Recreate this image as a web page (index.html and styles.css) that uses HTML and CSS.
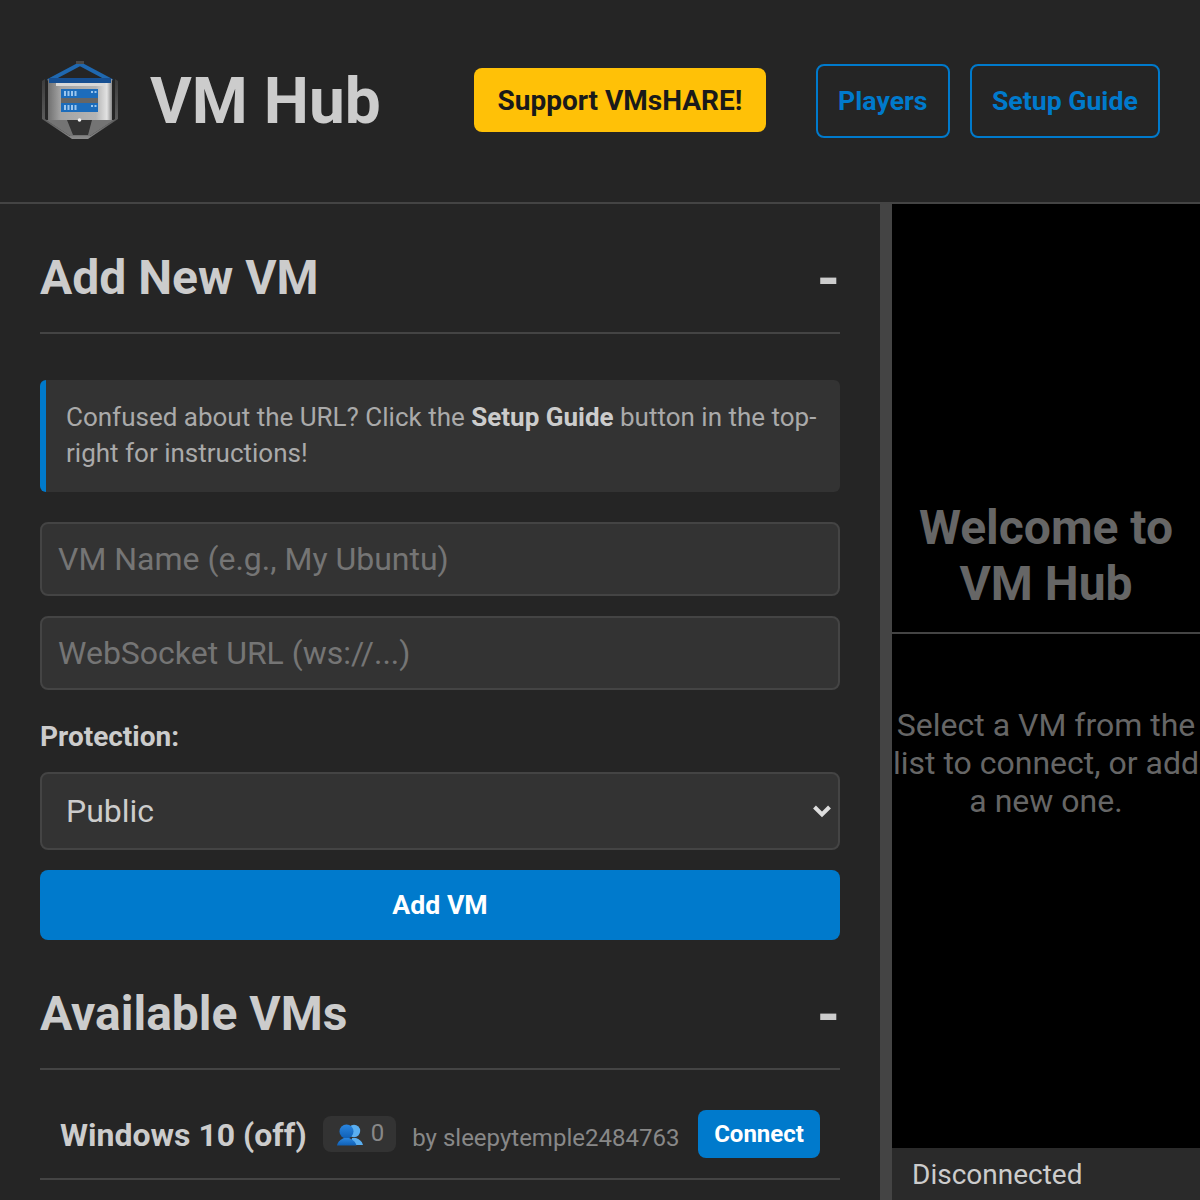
FILE: index.html
```html
<!DOCTYPE html>
<html lang="en">
<head>
<meta charset="utf-8">
<title>VM Hub</title>
<link rel="stylesheet" href="styles.css">
</head>
<body>
<header class="header">
  <div class="brand">
    <svg class="logo" viewBox="0 0 80 80" aria-hidden="true">
      <defs>
        <linearGradient id="silver" x1="0" x2="1" y1="0" y2="0">
          <stop offset="0" stop-color="#707070"/>
          <stop offset="0.2" stop-color="#a4a4a4"/>
          <stop offset="0.75" stop-color="#b4b4b4"/>
          <stop offset="0.92" stop-color="#e2e2e2"/>
          <stop offset="1" stop-color="#8c8c8c"/>
        </linearGradient>
        <linearGradient id="shell" x1="0" x2="0" y1="0" y2="1">
          <stop offset="0" stop-color="#3c3c3c"/>
          <stop offset="0.7" stop-color="#5c5c5c"/>
          <stop offset="1" stop-color="#8a8a8a"/>
        </linearGradient>
      </defs>
      <path d="M2 20 L5 18 V58 L30 75 H50 L75 58 V18 L78 20 V58 L48 78 H32 L2 58 Z" fill="url(#shell)"/>
      <path d="M8 20 L40 3 L72 20" fill="none" stroke="#1f68b0" stroke-width="4"/>
      <rect x="36" y="0" width="8" height="3" fill="#4a4a4a"/>
      <rect x="8" y="18" width="64" height="41" fill="url(#silver)"/>
      <rect x="9" y="17" width="62" height="5" fill="#164f92"/>
      <rect x="16" y="22" width="48" height="3" fill="#d8d8d8"/>
      <rect x="21" y="28" width="37" height="9" fill="#1c6cbb"/>
      <rect x="21" y="37" width="37" height="5" fill="#666"/>
      <rect x="21" y="42" width="37" height="9" fill="#1c6cbb"/>
      <path d="M24 30 h2 v5 h-2z M27.500 30 h2 v5 h-2z M31 30 h2 v5 h-2z M34.500 30 h2 v5 h-2z M24 44 h2 v5 h-2z M27.500 44 h2 v5 h-2z M31 44 h2 v5 h-2z M34.500 44 h2 v5 h-2z M51 30 h2 v2 h-2z M54.500 30 h2 v2 h-2z M51 44 h2 v2 h-2z M54.500 44 h2 v2 h-2z" fill="#9cc6ee"/>
      <path d="M6 59 H74 L50 75 H30 Z" fill="#747474"/>
      <path d="M27 59 H52 L48 74 H33 Z" fill="#333"/>
      <circle cx="39.500" cy="59" r="1.800" fill="#f4f4f4"/>
    </svg>
    <h1 class="brand-name">VM Hub</h1>
  </div>
  <div class="actions">
    <button class="btn-support">Support VMsHARE!</button>
    <div class="nav">
      <button class="btn-outline">Players</button>
      <button class="btn-outline">Setup Guide</button>
    </div>
  </div>
</header>
<main class="main">
  <aside class="sidebar">
    <section class="section-head first">
      <h2>Add New VM</h2>
      <span class="toggle">-</span>
    </section>
    <div class="notice">Confused about the URL? Click the <strong>Setup Guide</strong> button in the top-right for instructions!</div>
    <input class="field" type="text" placeholder="VM Name (e.g., My Ubuntu)">
    <input class="field" type="text" placeholder="WebSocket URL (ws://...)">
    <label class="label" for="protection">Protection:</label>
    <div class="select-wrap">
      <select class="select" id="protection"><option>Public</option></select>
      <svg class="chevron" viewBox="0 0 20 14" aria-hidden="true">
        <path d="M2.500 3 L10 10.500 L17.500 3" fill="none" stroke="#ddd" stroke-width="4"/>
      </svg>
    </div>
    <button class="btn-add">Add VM</button>
    <section class="section-head">
      <h2>Available VMs</h2>
      <span class="toggle">-</span>
    </section>
    <div class="vm-row">
      <span class="vm-name">Windows 10 (off)</span>
      <span class="badge">
        <svg class="people" viewBox="0 0 26 22" aria-hidden="true">
          <defs>
            <linearGradient id="front" x1="0" x2="0" y1="0" y2="1">
              <stop offset="0" stop-color="#2a86e0"/>
              <stop offset="1" stop-color="#0f5fb5"/>
            </linearGradient>
          </defs>
          <circle cx="17" cy="7" r="6.200" fill="#5aaef0"/>
          <path d="M15 14 L19 14 C22 15 25 17 26 21 H14 Z" fill="#5aaef0"/>
          <circle cx="9.500" cy="7.500" r="7" fill="url(#front)"/>
          <path d="M7 14 H12 C15 15.500 18.500 17 19.500 21.500 H0 C1 17 4 15.500 7 14 Z" fill="url(#front)"/>
        </svg>
        <span>0</span>
      </span>
      <span class="vm-owner">by sleepytemple2484763</span>
      <button class="btn-connect">Connect</button>
    </div>
  </aside>
  <div class="resizer"></div>
  <section class="viewer">
    <div class="welcome">
      <div class="welcome-top"><h2>Welcome to VM Hub</h2></div>
      <p>Select a VM from the list to connect, or add a new one.</p>
    </div>
    <div class="status">Disconnected</div>
  </section>
</main>
</body>
</html>
```
FILE: styles.css
```css
* { box-sizing: border-box; }
html, body { margin: 0; height: 100%; }
body {
  width: 1200px;
  height: 1200px;
  overflow: hidden;
  background: #252525;
  color: #ccc;
  font-family: Roboto, "Noto Sans", sans-serif;
  display: flex;
  flex-direction: column;
}
button { font-family: inherit; cursor: pointer; }

.header {
  height: 204px;
  flex: none;
  display: flex;
  align-items: center;
  justify-content: space-between;
  padding: 0 40px;
  border-bottom: 2px solid #444;
}
.brand { display: flex; align-items: center; gap: 30px; }
.logo { width: 80px; height: 80px; display: block; filter: blur(0.6px); }
.brand-name { margin: 0; font-size: 64px; font-weight: 700; line-height: 75px; color: #ccc; }
.actions { display: flex; align-items: center; gap: 50px; }
.nav { display: flex; gap: 20px; }
.btn-support {
  height: 64px;
  width: 292px;
  border: 0;
  border-radius: 8px;
  background: #ffc107;
  color: #1a1a1a;
  font-size: 28px;
  font-weight: 700;
  padding: 0;
  margin-bottom: 2px;
}
.btn-outline {
  height: 74px;
  padding: 0 20.200px;
  border: 2px solid #007acc;
  border-radius: 8px;
  background: transparent;
  color: #007acc;
  font-size: 26.670px;
  font-weight: 700;
}

.main { flex: 1; display: flex; min-height: 0; }
.sidebar {
  width: 880px;
  flex: none;
  padding: 0 40px;
  overflow: hidden;
  display: flex;
  flex-direction: column;
  align-items: stretch;
}
.section-head {
  display: flex;
  align-items: center;
  justify-content: space-between;
  height: 102px;
  padding-bottom: 8px;
  flex: none;
  border-bottom: 2px solid #444;
  margin-top: 28px;
}
.section-head.first { height: 130px; margin-top: 0; padding: 20px 0 0; margin-bottom: 46px; }
.section-head h2 { margin: 0; font-size: 48px; font-weight: 700; line-height: 56px; color: #ccc; }
.toggle { font-size: 58px; font-weight: 700; line-height: 56px; color: #ccc; width: 20px; margin-right: 3px; text-align: center; }

.notice {
  background: #333;
  border-left: 6px solid #007acc;
  border-radius: 6px;
  padding: 19px 20px 21px;
  font-size: 26px;
  line-height: 36px;
  color: #aaa;
  margin-bottom: 30px;
}
.notice strong { color: #ccc; font-weight: 700; }
.field {
  display: block;
  width: 100%;
  flex: none;
  height: 74px;
  padding: 0 16px;
  margin-bottom: 20px;
  background: #333;
  border: 2px solid #444;
  border-radius: 8px;
  color: #ccc;
  font-family: inherit;
  font-size: 32px;
  outline: none;
}
.field::placeholder { color: #757575; opacity: 1; }
.label { font-size: 28px; font-weight: 700; line-height: 33px; color: #ccc; margin: 10px 0 19px; }
.select-wrap { position: relative; flex: none; margin-bottom: 20px; }
.select {
  display: block;
  width: 100%;
  height: 78px;
  padding: 0 16px 0 24px;
  background: #333;
  border: 2px solid #444;
  border-radius: 8px;
  color: #ccc;
  font-family: inherit;
  font-size: 32px;
  appearance: none;
}
.chevron { position: absolute; right: 8px; top: 32px; width: 20px; height: 14px; pointer-events: none; }
.btn-add {
  flex: none;
  height: 70px;
  border: 0;
  border-radius: 8px;
  background: #007acc;
  color: #fff;
  font-size: 26.670px;
  font-weight: 700;
}
.vm-row {
  display: flex;
  align-items: center;
  flex: none;
  height: 110px;
  padding: 20px 20px 0;
  border-bottom: 2px solid #444;
}
.vm-name { font-size: 32px; font-weight: 700; color: #ccc; white-space: nowrap; padding-top: 1px; }
.badge {
  display: inline-flex;
  align-items: center;
  gap: 8px;
  height: 36px;
  margin-left: 16px;
  padding: 0 12px 2px 14px;
  border-radius: 8px;
  background: #333;
  color: #888;
  font-size: 24px;
}
.people { width: 26px; height: 22px; display: block; margin-top: 4px; }
.vm-owner { margin-left: 16px; font-size: 24px; color: #888; white-space: nowrap; padding-top: 8px; }
.btn-connect {
  margin-left: auto;
  height: 48px;
  width: 122px;
  border: 0;
  border-radius: 8px;
  padding: 0;
  background: #007acc;
  color: #fff;
  font-size: 24px;
  font-weight: 700;
}

.resizer { width: 12px; flex: none; background: #444; }
.viewer { flex: 1; min-width: 0; background: #000; display: flex; flex-direction: column; overflow: hidden; }
.welcome { flex: 1; min-height: 0; color: #666; }
.welcome-top {
  height: 430px;
  display: flex;
  align-items: flex-end;
  justify-content: center;
  border-bottom: 2px solid #444;
  padding-bottom: 20px;
}
.welcome h2 { margin: 0; font-size: 48px; font-weight: 700; line-height: 56px; text-align: center; color: #666; }
.welcome p { margin: 72px 0 0; font-size: 32px; line-height: 38px; text-align: center; color: #666; }
.status { height: 52px; flex: none; background: #2a2a2a; color: #ccc; font-size: 28px; line-height: 54px; padding-left: 20px; }
```
